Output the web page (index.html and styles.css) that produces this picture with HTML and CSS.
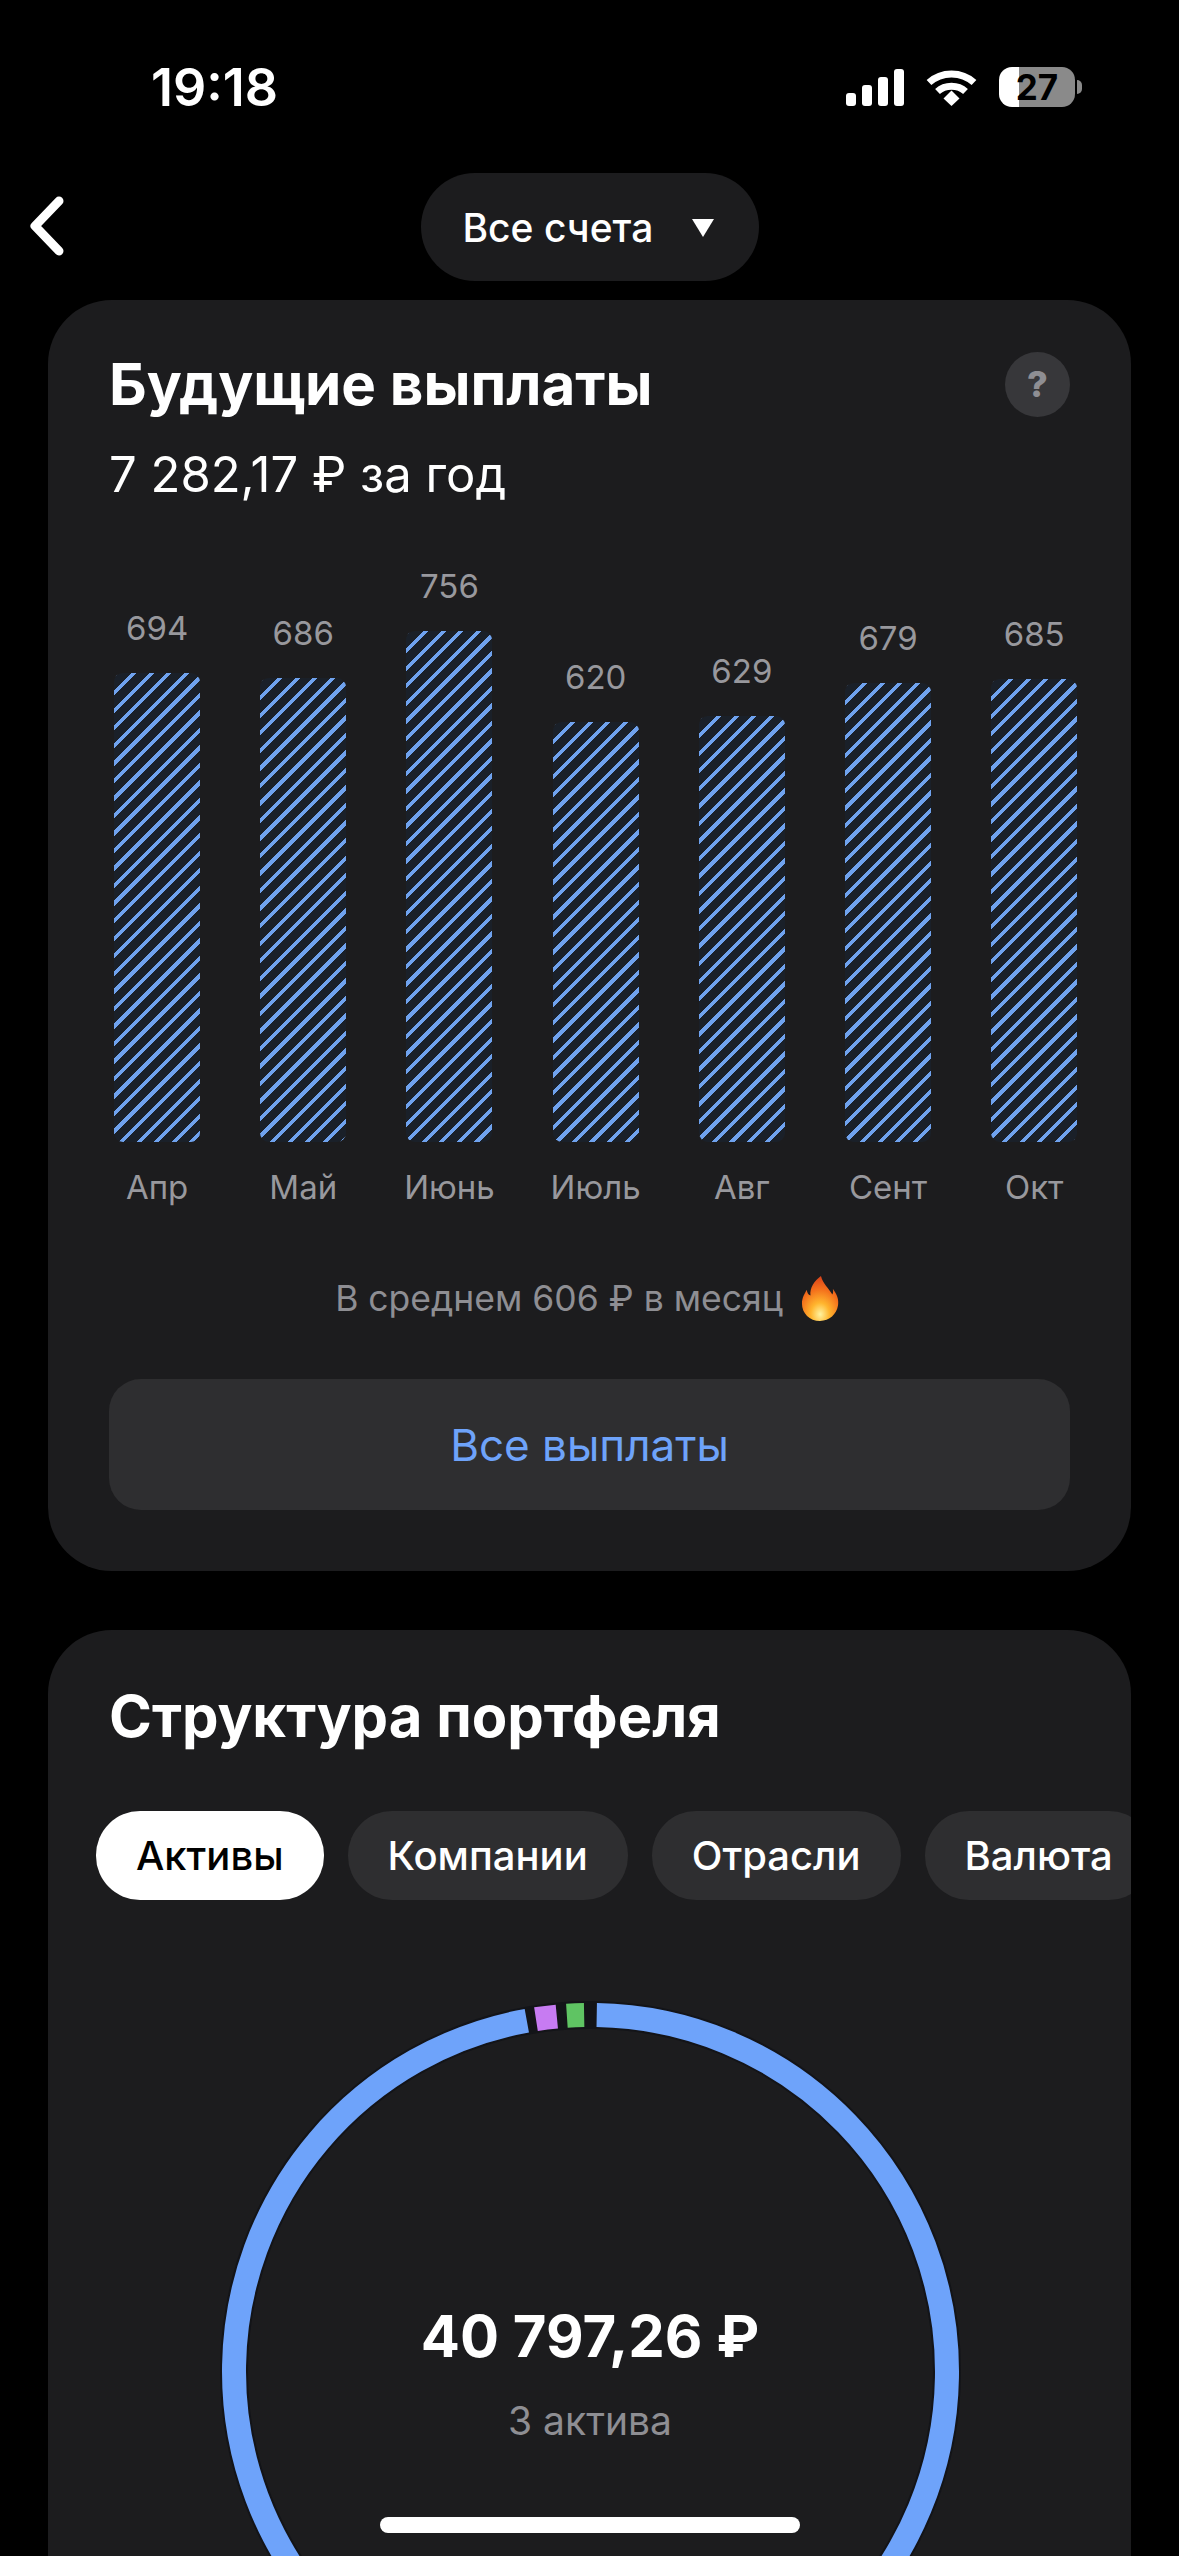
FILE: index.html
```html
<!DOCTYPE html>
<html lang="ru">
	<head>
		<meta charset="UTF-8">
		<title>Будущие выплаты</title>
		<link rel="stylesheet" href="styles.css">
	</head>

	<body>
		<header class="status">
			<span class="time">19:18</span>
			<div class="status-icons">
				<svg class="signal" width="58" height="37" viewBox="0 0 58 37" fill="#fff">
					<rect x="0" y="24" width="10" height="13" rx="3"/>
					<rect x="16" y="16" width="10" height="21" rx="3"/>
					<rect x="32" y="8" width="10" height="29" rx="3"/>
					<rect x="48" y="0" width="10" height="37" rx="3"/>
				</svg>
				<svg class="wifi" width="51" height="37" viewBox="0 0 51 37" fill="none" stroke="#fff" stroke-width="7">
					<path d="M3 13.5C15.500 2 35.500 2 48 13.500"/>
					<path d="M11.500 22.500C19 15.500 32 15.500 39.500 22.500"/>
					<path d="M17.500 29.500L25.500 21.500L33.500 29.500L25.500 37Z" fill="#fff" stroke="none"/>
				</svg>
				<div class="battery">
					<span class="battery-level">27</span>
				</div>
			</div>
		</header>

		<nav class="topbar">
			<a class="back">
				<svg width="40" height="64" viewBox="0 0 40 64" fill="none" stroke="#fff" stroke-width="9" stroke-linecap="round" stroke-linejoin="round">
					<path d="M32 6L8 31L32 56"/>
				</svg>
			</a>
			<div class="account-pill">
				<span>Все счета</span>
				<i class="caret"></i>
			</div>
		</nav>

		<section class="card">
			<div class="card-head">
				<h2>Будущие выплаты</h2>
				<span class="help">?</span>
			</div>
			<p class="total">7 282,17 ₽ за год</p>

			<div class="chart">
				<div class="col"><span class="val">694</span><div class="bar" style="height:469px"></div><span class="month">Апр</span></div>
				<div class="col"><span class="val">686</span><div class="bar" style="height:464px"></div><span class="month">Май</span></div>
				<div class="col"><span class="val">756</span><div class="bar" style="height:511px"></div><span class="month">Июнь</span></div>
				<div class="col"><span class="val">620</span><div class="bar" style="height:420px"></div><span class="month">Июль</span></div>
				<div class="col"><span class="val">629</span><div class="bar" style="height:426px"></div><span class="month">Авг</span></div>
				<div class="col"><span class="val">679</span><div class="bar" style="height:459px"></div><span class="month">Сент</span></div>
				<div class="col"><span class="val">685</span><div class="bar" style="height:463px"></div><span class="month">Окт</span></div>
			</div>

			<p class="average">
				<span>В среднем 606 ₽ в месяц</span>
				<svg width="38" height="45" viewBox="0 0 40 46" preserveAspectRatio="none">
					<defs>
						<radialGradient id="flame" cx="0.5" cy="0.85" r="0.85">
							<stop offset="0" stop-color="#fff3a0"/>
							<stop offset="0.3" stop-color="#ffb52e"/>
							<stop offset="0.65" stop-color="#f4711c"/>
							<stop offset="1" stop-color="#d8401a"/>
						</radialGradient>
					</defs>
					<path d="M21 0C23 8 29 12 33 19C34 17 34 15 33.500 13C38 19 40 24 39 30C37.500 39 30 46 20 46C9 46 1 38 1 28C1 22 4 18 6 14C6.500 17 7.500 19 10 20C9 12 14 5 21 0Z" fill="url(#flame)"/>
				</svg>
			</p>

			<a class="wide-btn">Все выплаты</a>
		</section>

		<section class="card card-structure">
			<h2>Структура портфеля</h2>
			<div class="tabs">
				<span class="tab active">Активы</span>
				<span class="tab">Компании</span>
				<span class="tab">Отрасли</span>
				<span class="tab">Валюта</span>
			</div>
			<div class="ring">
				<svg width="737" height="737" viewBox="0 0 737 737" fill="none" stroke-width="24">
					<circle cx="368.500" cy="368.500" r="356.500" stroke="#131418" stroke-width="28"/>
					<circle cx="368.500" cy="368.500" r="356.500" pathLength="360" stroke="#6ea3fa" stroke-dasharray="348.700 360" transform="rotate(-89 368.500 368.500)"/>
					<circle cx="368.500" cy="368.500" r="356.500" pathLength="360" stroke="#c77bf2" stroke-dasharray="3.400 360" transform="rotate(-98.800 368.500 368.500)"/>
					<circle cx="368.500" cy="368.500" r="356.500" pathLength="360" stroke="#5fc463" stroke-dasharray="2.800 360" transform="rotate(-93.800 368.500 368.500)"/>
				</svg>
				<div class="ring-label">
					<strong>40 797,26 ₽</strong>
					<span>3 актива</span>
				</div>
			</div>
		</section>

		<div class="home-bar"></div>
	</body>
</html>
```

FILE: styles.css
```css
html, body {
    height: 2556px;
    overflow: hidden;
}

body {
    margin: 0;
    background: #000;
    color: #fff;
    font-family: Inter, "Noto Sans", "Liberation Sans", sans-serif;
}

h2, p {
    margin: 0;
}

.status {
    height: 173px;
    box-sizing: border-box;
    padding: 57px 104px 0 151px;
    display: flex;
    justify-content: space-between;
    align-items: flex-start;
}

.time {
    font-size: 52px;
    font-weight: 600;
    line-height: 62px;
}

.status-icons {
    display: flex;
    align-items: center;
    gap: 22px;
    margin-top: 10px;
}

.battery {
    position: relative;
    width: 76px;
    height: 40px;
    border-radius: 13px;
    background: linear-gradient(90deg, #fff 0 26%, #8a8a8a 26% 100%);
    display: flex;
    align-items: center;
    justify-content: center;
}

/* nub on the right end */
.battery::after {
    content: "";
    position: absolute;
    right: -7px;
    top: 13px;
    width: 5px;
    height: 14px;
    border-radius: 0 7px 7px 0;
    background: #8a8a8a;
}

.battery-level {
    color: #000;
    font-size: 35px;
    font-weight: 700;
    line-height: 40px;
}

.topbar {
    height: 108px;
    margin-bottom: 19px;
    display: flex;
    justify-content: center;
    position: relative;
}

.back {
    position: absolute;
    left: 27px;
    top: 22px;
}

.account-pill {
    width: 338px;
    box-sizing: border-box;
    border-radius: 54px;
    background: #1c1c1e;
    padding: 0 45px 0 42px;
    display: flex;
    align-items: center;
    justify-content: space-between;
    font-size: 39px;
    font-weight: 500;
}

.caret {
    width: 0;
    height: 0;
    margin-top: 2px;
    border-left: 11px solid transparent;
    border-right: 11px solid transparent;
    border-top: 18px solid #fff;
}

.card {
    margin: 0 48px 59px 48px;
    padding: 51px 61px 61px 61px;
    background: #1c1c1e;
    border-radius: 64px;
}

.card-head {
    display: flex;
    justify-content: space-between;
    align-items: center;
}

h2 {
    font-size: 58.300px;
    font-weight: 700;
    line-height: 66px;
}

.help {
    width: 65px;
    height: 65px;
    border-radius: 50%;
    background: #37373a;
    color: #8e8e93;
    font-size: 36px;
    font-weight: 800;
    display: flex;
    align-items: center;
    justify-content: center;
}

.total {
    margin-top: 28px;
    font-size: 49px;
    line-height: 60px;
}

.chart {
    margin: 58px -36px 0 -25px;
    display: grid;
    grid-template-columns: repeat(7, 146.200px);
    align-items: end;
}

.col {
    display: flex;
    flex-direction: column;
    align-items: center;
    font-size: 33px;
    line-height: 46px;
    color: #98989d;
}

.val {
    margin-bottom: 22px;
}

.bar {
    width: 86px;
    border-radius: 9px;
    background: repeating-linear-gradient(135deg, #6fa2ee 0 3.800px, #1a2029 3.800px 12.400px);
}

.month {
    margin-top: 22px;
}

.average {
    margin-top: 63px;
    height: 50px;
    padding-right: 5px;
    display: flex;
    align-items: center;
    justify-content: center;
    gap: 18px;
    color: #8e8e93;
    font-size: 35.500px;
}

.wide-btn {
    margin-top: 56px;
    height: 131px;
    border-radius: 32px;
    background: #2e2e30;
    color: #6ea3fa;
    font-size: 44px;
    display: flex;
    align-items: center;
    justify-content: center;
}

.card-structure {
    padding-top: 53px;
    overflow: hidden;
    margin-bottom: 0;
}

.card-structure h2 {
    font-size: 58px;
}

.tabs {
    margin: 62px -61px 0 -13px;
    display: flex;
    gap: 24px;
}

.tab {
    height: 89px;
    padding: 0 40px;
    border-radius: 44px;
    background: #2e2e30;
    font-size: 40px;
    font-weight: 500;
    display: flex;
    align-items: center;
    flex: none;
}

.tab.active {
    background: #fff;
    color: #000;
}

.ring {
    position: relative;
    width: 737px;
    height: 737px;
    margin: 103px 0 0 112.500px;
}

.ring svg {
    display: block;
    overflow: visible;
}

.ring-label {
    position: absolute;
    top: 0;
    right: 0;
    bottom: 0;
    left: 0;
    display: flex;
    flex-direction: column;
    align-items: center;
    justify-content: center;
    gap: 26px;
}

.ring-label strong {
    font-size: 58px;
    font-weight: 700;
    line-height: 72px;
}

.ring-label span {
    font-size: 39px;
    line-height: 46px;
    color: #8e8e93;
}

.home-bar {
    position: fixed;
    left: 380px;
    top: 2517px;
    width: 420px;
    height: 16px;
    border-radius: 8px;
    background: #fff;
}
```
